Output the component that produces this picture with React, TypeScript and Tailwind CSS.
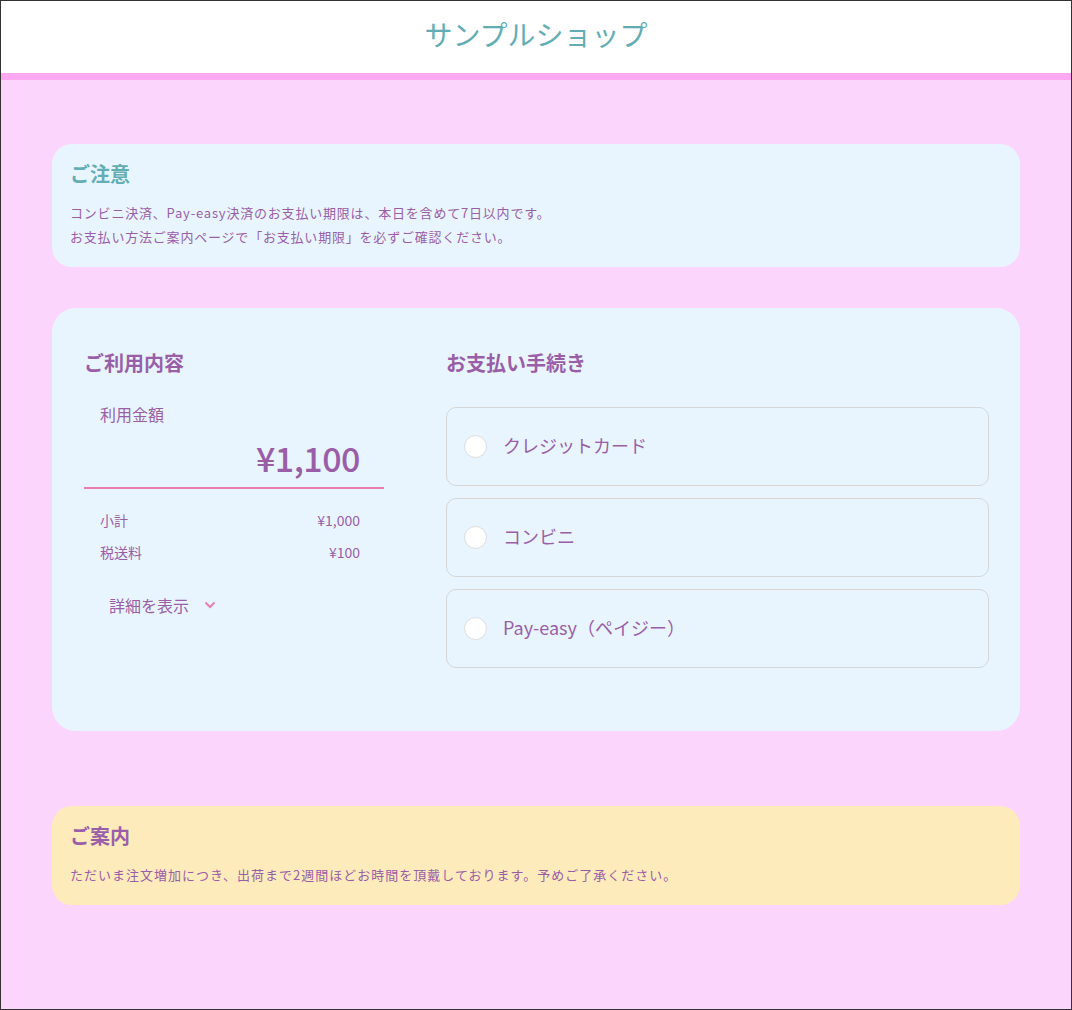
const font = { fontFamily: '"Noto Sans CJK JP", "Noto Sans", sans-serif' }

const methods = ['クレジットカード', 'コンビニ', 'Pay-easy（ペイジー）']

export default function App() {
  return (
    <div
      className="min-h-[1010px] w-full border border-[#333333] bg-[#fcd5fd] text-[#9a5ea9]"
      style={font}
    >
      {/* Header */}
      <header className="flex h-[72px] items-center justify-center bg-white pb-[6px]">
        <h1 className="text-[28px] leading-none font-normal text-[#62adb5]">サンプルショップ</h1>
      </header>
      <div className="h-[7px] bg-[#fea8f2]" />

      <main className="px-[51px] pt-[64px] pb-[104px]">
        {/* Notice */}
        <section className="rounded-[20px] bg-[#e8f5fe] px-[18px] pt-[18px] pb-[18px]">
          <h2 className="text-[20px] leading-[24px] font-bold text-[#63adb5]">ご注意</h2>
          <p className="mt-[15px] text-[13px] leading-[24px] tracking-[0.8px]">
            コンビニ決済、Pay-easy決済のお支払い期限は、本日を含めて7日以内です。
            <br />
            お支払い方法ご案内ページで「お支払い期限」を必ずご確認ください。
          </p>
        </section>

        {/* Main */}
        <section className="mt-[41px] flex gap-[62px] rounded-[24px] bg-[#e8f5fe] pt-[43px] pr-[31px] pb-[63px] pl-[32px]">
          <div className="w-[300px] shrink-0">
            <h2 className="text-[20px] leading-[24px] font-bold">ご利用内容</h2>
            <div className="mt-[28px] pl-[16px] text-[16px] leading-[22px]">利用金額</div>
            <div className="mt-[8px] pr-[24px] text-right text-[34px] leading-[50px] font-medium tracking-[-0.5px]">¥1,100</div>
            <div className="mt-[4px] h-[2px] bg-[#e97ca9]" />
            <div className="mt-[20px] flex flex-col gap-[10px] pr-[24px] pl-[16px] text-[14px] leading-[22px]">
              <div className="flex justify-between">
                <span>小計</span>
                <span>¥1,000</span>
              </div>
              <div className="flex justify-between">
                <span>税送料</span>
                <span>¥100</span>
              </div>
            </div>
            <button className="mt-[31px] ml-[25px] flex items-center gap-[15px] text-[16px] leading-[22px] text-[#9a5ea9]">
              詳細を表示
              <svg width="12" height="8" viewBox="0 0 12 8" fill="none">
                <path d="M1.5 1.5 6 6l4.5-4.5" stroke="#ec7fb0" strokeWidth="2" />
              </svg>
            </button>
          </div>

          <div className="flex-1">
            <h2 className="text-[20px] leading-[24px] font-bold">お支払い手続き</h2>
            <div className="mt-[32px] flex flex-col gap-[12px]">
              {methods.map((m) => (
                <label
                  key={m}
                  className="flex h-[79px] items-center gap-[16px] rounded-[10px] border border-[#d6d6d6] pl-[17px]"
                >
                  <span className="h-[23px] w-[23px] rounded-full border border-[#dddddd] bg-white" />
                  <span className="pb-[4px] text-[18px] leading-[24px]">{m}</span>
                </label>
              ))}
            </div>
          </div>
        </section>

        {/* Info */}
        <section className="mt-[75px] rounded-[20px] bg-[#feebbb] px-[18px] pt-[18px] pb-[18px]">
          <h2 className="text-[20px] leading-[24px] font-bold">ご案内</h2>
          <p className="mt-[15px] text-[13px] leading-[24px] tracking-[1px]">
            ただいま注文増加につき、出荷まで2週間ほどお時間を頂戴しております。予めご了承ください。
          </p>
        </section>
      </main>
    </div>
  )
}
